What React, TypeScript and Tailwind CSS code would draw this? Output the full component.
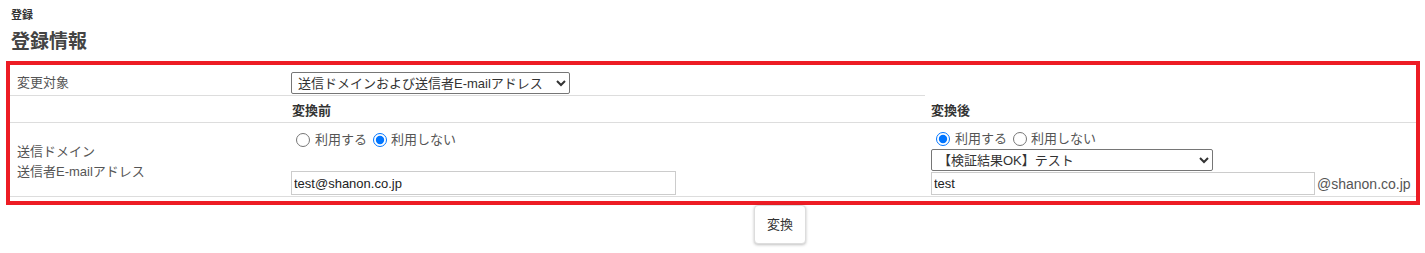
import { useState } from 'react';

const font = 'font-["Liberation_Sans","Noto_Sans_CJK_JP",sans-serif]';

function RadioPair({ name, initial }: { name: string; initial: 'use' | 'none' }) {
  const [value, setValue] = useState(initial);
  return (
    <div className="flex h-[15px] items-center text-[13px] leading-[15px] text-[#555]">
      <input
        type="radio"
        name={name}
        checked={value === 'use'}
        onChange={() => setValue('use')}
        className="m-0 ml-[5px] h-[14px] w-[14px]"
      />
      <span className="ml-[5px]">利用する</span>
      <input
        type="radio"
        name={name}
        checked={value === 'none'}
        onChange={() => setValue('none')}
        className="m-0 ml-[6px] h-[14px] w-[14px]"
      />
      <span className="ml-[4px]">利用しない</span>
    </div>
  );
}

export default function App() {
  return (
    <div className={`${font} min-h-[253px] bg-white text-[13px] text-[#555]`}>
      {/* page heading */}
      <div className="pl-[11px] pt-[8px]">
        <p className="text-[11px] font-bold leading-[14px] text-[#333]">登録</p>
        <h2 className="mt-[8px] text-[19px] font-bold leading-[24px] text-[#444]">登録情報</h2>
      </div>

      <div className="ml-[6px] mt-[7px] w-[1414px] border-4 border-[#ed1c24] pb-[4px]">
        {/* 変更対象 */}
        <div className="flex">
          <div className="flex h-[31px] w-[915px] border-b border-[#ddd]">
            <div className="flex w-[275px] items-center pl-[7px] pt-[6px] leading-[16px]">変更対象</div>
            <div className="pl-[6px] pt-[7px]">
              <select
                defaultValue="both"
                className="h-[22px] w-[279px] rounded-[2px] border border-[#767676] bg-white pl-[2px] text-[13px] text-[#333]"
              >
                <option value="both">送信ドメインおよび送信者E-mailアドレス</option>
                <option value="domain">送信ドメイン</option>
                <option value="address">送信者E-mailアドレス</option>
              </select>
            </div>
          </div>
        </div>

        {/* column headings */}
        <div className="flex h-[27px] border-b border-[#ddd] text-[13px] font-bold leading-[16px] text-[#333]">
          <div className="w-[275px]" />
          <div className="w-[640px] pl-[7px] pt-[7px]">変換前</div>
          <div className="flex-1 pl-[6px] pt-[7px]">変換後</div>
        </div>

        {/* 送信ドメイン / 送信者E-mailアドレス */}
        <div className="flex h-[74px] border-b border-[#ddd]">
          <div className="flex w-[275px] flex-col justify-center pl-[7px] pt-[5px] leading-[20px]">
            <span>送信ドメイン</span>
            <span>送信者E-mailアドレス</span>
          </div>
          <div className="w-[640px] pl-[6px] pt-[9px]">
            <RadioPair name="before" initial="none" />
            <input
              type="text"
              defaultValue="test@shanon.co.jp"
              className="mt-[24px] block h-[24px] w-[385px] border border-[#ccc] px-[2px] text-[13px] text-[#222]"
            />
          </div>
          <div className="flex-1 pl-[6px] pt-[8px]">
            <RadioPair name="after" initial="use" />
            <select
              defaultValue="ok"
              className="mt-[3px] block h-[22px] w-[282px] rounded-[2px] border border-[#767676] bg-white pl-[2px] text-[13px] text-[#333]"
            >
              <option value="ok">【検証結果OK】テスト</option>
            </select>
            <div className="mt-[1px] flex items-end">
              <input
                type="text"
                defaultValue="test"
                className="block h-[23px] w-[384px] border border-[#ccc] px-[2px] text-[13px] text-[#222]"
              />
              <span className="pb-[3px] pl-[2px] text-[14px] leading-[16px]">@shanon.co.jp</span>
            </div>
          </div>
        </div>
      </div>

      <button
        type="button"
        className="ml-[754px] block h-[39px] w-[52px] rounded-[4px] border border-[#ddd] bg-white text-[13px] text-[#333] shadow-[0_1px_3px_rgba(0,0,0,0.25)]"
      >
        変換
      </button>
    </div>
  );
}
